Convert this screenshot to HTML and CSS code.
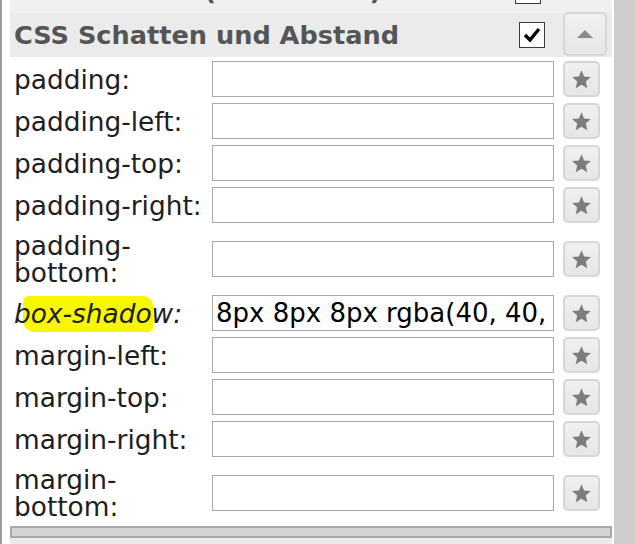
FILE: index.html
```html
<!DOCTYPE html>
<html lang="de">
<head>
    <meta charset="UTF-8">
    <title>CSS Schatten und Abstand</title>
    <link rel="stylesheet" href="styles.css">
</head>
<body>
    <div class="frame">
        <div class="panel">
            <div class="sec-head sec-prev">
                <span class="sec-title">CSS Rahmen (Randlinien)</span>
                <span class="check"></span>
                <span class="toggle hidden"></span>
            </div>

            <div class="sec-head">
                <span class="sec-title">CSS Schatten und Abstand</span>
                <span class="check">
                    <svg width="20" height="20" viewBox="0 0 20 20"><polyline points="3,10 8,15 17,4" fill="none" stroke="#000" stroke-width="3.4" stroke-linejoin="miter"/></svg>
                </span>
                <button class="toggle"><svg width="16" height="9" viewBox="0 0 16 9"><polygon points="0,8 8,0 16,8" fill="#8a8a8a"/></svg></button>
            </div>

            <div class="rows">
                <div class="row">
                    <label>padding:</label>
                    <input type="text">
                    <button class="fav"><svg width="21" height="21" viewBox="0 0 24 24"><polygon points="12,1.5 15,8.6 22.7,9.2 16.9,14.3 18.6,22 12,18 5.4,22 7.1,14.3 1.3,9.2 9,8.6" fill="#7d7d7d"/></svg></button>
                </div>
                <div class="row">
                    <label>padding-left:</label>
                    <input type="text">
                    <button class="fav"><svg width="21" height="21" viewBox="0 0 24 24"><polygon points="12,1.5 15,8.6 22.7,9.2 16.9,14.3 18.6,22 12,18 5.4,22 7.1,14.3 1.3,9.2 9,8.6" fill="#7d7d7d"/></svg></button>
                </div>
                <div class="row">
                    <label>padding-top:</label>
                    <input type="text">
                    <button class="fav"><svg width="21" height="21" viewBox="0 0 24 24"><polygon points="12,1.5 15,8.6 22.7,9.2 16.9,14.3 18.6,22 12,18 5.4,22 7.1,14.3 1.3,9.2 9,8.6" fill="#7d7d7d"/></svg></button>
                </div>
                <div class="row">
                    <label>padding-right:</label>
                    <input type="text">
                    <button class="fav"><svg width="21" height="21" viewBox="0 0 24 24"><polygon points="12,1.5 15,8.6 22.7,9.2 16.9,14.3 18.6,22 12,18 5.4,22 7.1,14.3 1.3,9.2 9,8.6" fill="#7d7d7d"/></svg></button>
                </div>
                <div class="row">
                    <label>padding-bottom:</label>
                    <input type="text">
                    <button class="fav"><svg width="21" height="21" viewBox="0 0 24 24"><polygon points="12,1.5 15,8.6 22.7,9.2 16.9,14.3 18.6,22 12,18 5.4,22 7.1,14.3 1.3,9.2 9,8.6" fill="#7d7d7d"/></svg></button>
                </div>
                <div class="row">
                    <label class="set"><span class="mark"></span><span class="txt">box-shadow:</span></label>
                    <input type="text" value="8px 8px 8px rgba(40, 40, 40, 0.5)">
                    <button class="fav"><svg width="21" height="21" viewBox="0 0 24 24"><polygon points="12,1.5 15,8.6 22.7,9.2 16.9,14.3 18.6,22 12,18 5.4,22 7.1,14.3 1.3,9.2 9,8.6" fill="#7d7d7d"/></svg></button>
                </div>
                <div class="row">
                    <label>margin-left:</label>
                    <input type="text">
                    <button class="fav"><svg width="21" height="21" viewBox="0 0 24 24"><polygon points="12,1.5 15,8.6 22.7,9.2 16.9,14.3 18.6,22 12,18 5.4,22 7.1,14.3 1.3,9.2 9,8.6" fill="#7d7d7d"/></svg></button>
                </div>
                <div class="row">
                    <label>margin-top:</label>
                    <input type="text">
                    <button class="fav"><svg width="21" height="21" viewBox="0 0 24 24"><polygon points="12,1.5 15,8.6 22.7,9.2 16.9,14.3 18.6,22 12,18 5.4,22 7.1,14.3 1.3,9.2 9,8.6" fill="#7d7d7d"/></svg></button>
                </div>
                <div class="row">
                    <label>margin-right:</label>
                    <input type="text">
                    <button class="fav"><svg width="21" height="21" viewBox="0 0 24 24"><polygon points="12,1.5 15,8.6 22.7,9.2 16.9,14.3 18.6,22 12,18 5.4,22 7.1,14.3 1.3,9.2 9,8.6" fill="#7d7d7d"/></svg></button>
                </div>
                <div class="row">
                    <label>margin-bottom:</label>
                    <input type="text">
                    <button class="fav"><svg width="21" height="21" viewBox="0 0 24 24"><polygon points="12,1.5 15,8.6 22.7,9.2 16.9,14.3 18.6,22 12,18 5.4,22 7.1,14.3 1.3,9.2 9,8.6" fill="#7d7d7d"/></svg></button>
                </div>
            </div>

            <div class="hbar"></div>
            <div class="sec-head sec-next"></div>
        </div>
        <div class="side"></div>
    </div>
</body>
</html>
```

FILE: styles.css
```css
html, body {
    margin: 0;
    padding: 0;
    height: 100%;
    overflow: hidden;
    background-color: #ffffff;
    font-family: "DejaVu Sans", Verdana, sans-serif;
}

.frame {
    display: flex;
    height: 100%;
}

.panel {
    flex: 1;
    border-left: 2px solid #9c9c9c;
    padding: 0 2px 0 8px;
    margin-top: -31px;
}

.side {
    width: 21px;
    background-color: #cdcdcd;
}

/* Kopfzeile einer Gruppe */
.sec-head {
    display: flex;
    align-items: center;
    height: 44px;
    padding: 0 5px 0 4px;
    background-color: #ebebeb;
}

.sec-prev {
    background-color: #f0f0f0;
}

.sec-title {
    flex: 1;
    font-size: 25.6px;
    font-weight: bold;
    color: #555555;
    white-space: nowrap;
}

.check {
    width: 24px;
    height: 24px;
    border: 1px solid #3a3a3a;
    background-color: #ffffff;
    display: flex;
    justify-content: center;
    align-items: center;
    margin-right: 18px;
}

.toggle {
    width: 44px;
    height: 44px;
    margin-top: -2px;
    padding: 0;
    border: 2px solid #d6d6d6;
    border-radius: 5px;
    background: linear-gradient(#f0f0f0, #e6e6e6);
    display: flex;
    justify-content: center;
    align-items: center;
}

.toggle.hidden {
    visibility: hidden;
}

/* Eigenschaften */
.rows {
    padding-top: 1px;
}

.row {
    display: flex;
    align-items: center;
    padding: 3px 0 3px 4px;
}

.row label {
    width: 198px;
    font-size: 26.4px;
    line-height: 27px;
    padding: 3px 0;
    color: #1e1e1e;
}

.row label.set {
    position: relative;
    font-style: italic;
}

.mark {
    position: absolute;
    left: 9px;
    top: -1px;
    width: 130px;
    height: 36px;
    background-color: #f7f700;
    border-radius: 6px 10px 5px 12px;
}

.txt {
    position: relative;
}

.row input {
    width: 342px;
    height: 36px;
    box-sizing: border-box;
    border: 1px solid #a9a9a9;
    padding: 0 3px;
    font-family: "DejaVu Sans", Verdana, sans-serif;
    font-size: 26px;
    color: #000000;
    background-color: #ffffff;
}

.fav {
    width: 37px;
    height: 36px;
    margin-left: 9px;
    padding: 0;
    border: 2px solid #d6d6d6;
    border-radius: 5px;
    background: linear-gradient(#f0f0f0, #e6e6e6);
    display: flex;
    justify-content: center;
    align-items: center;
}

.hbar {
    height: 8px;
    border: 2px solid #a8a8a8;
    background-color: #d4d4d4;
}

.sec-next {
    height: 20px;
}
```
